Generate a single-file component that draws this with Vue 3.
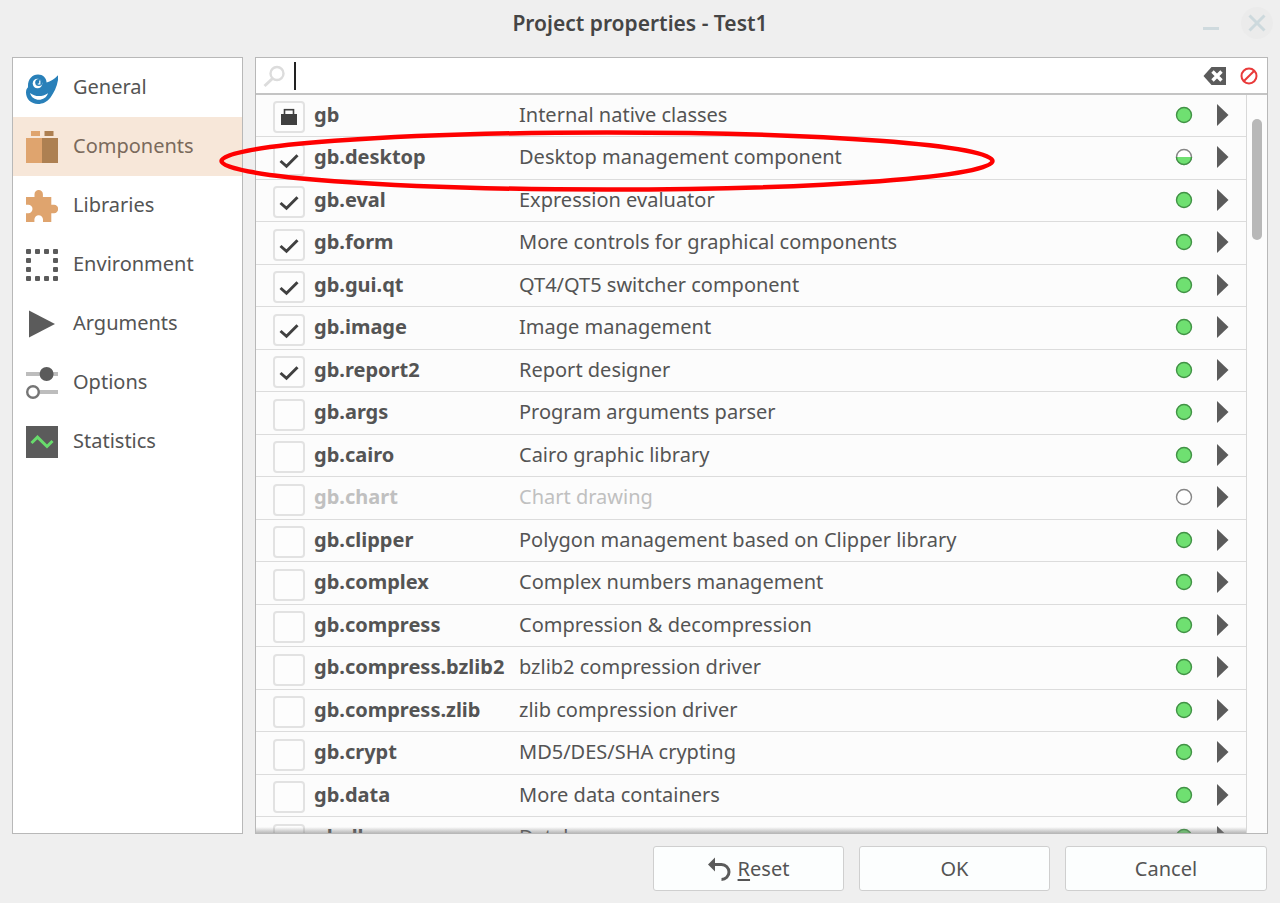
<script setup>
import { ref } from 'vue'

const sections = ['General', 'Components', 'Libraries', 'Environment', 'Arguments', 'Options', 'Statistics']
const current = ref('Components')
const query = ref('')

const envDots = [
  [0, 0], [9, 0], [18, 0], [27, 0],
  [0, 9], [27, 9],
  [0, 18], [27, 18],
  [0, 27], [9, 27], [18, 27], [27, 27],
]

const components = ref([
  { name: 'gb', text: 'Internal native classes', on: true, locked: true, state: 'full' },
  { name: 'gb.desktop', text: 'Desktop management component', on: true, state: 'half' },
  { name: 'gb.eval', text: 'Expression evaluator', on: true, state: 'full' },
  { name: 'gb.form', text: 'More controls for graphical components', on: true, state: 'full' },
  { name: 'gb.gui.qt', text: 'QT4/QT5 switcher component', on: true, state: 'full' },
  { name: 'gb.image', text: 'Image management', on: true, state: 'full' },
  { name: 'gb.report2', text: 'Report designer', on: true, state: 'full' },
  { name: 'gb.args', text: 'Program arguments parser', on: false, state: 'full' },
  { name: 'gb.cairo', text: 'Cairo graphic library', on: false, state: 'full' },
  { name: 'gb.chart', text: 'Chart drawing', on: false, state: 'none' },
  { name: 'gb.clipper', text: 'Polygon management based on Clipper library', on: false, state: 'full' },
  { name: 'gb.complex', text: 'Complex numbers management', on: false, state: 'full' },
  { name: 'gb.compress', text: 'Compression & decompression', on: false, state: 'full' },
  { name: 'gb.compress.bzlib2', text: 'bzlib2 compression driver', on: false, state: 'full' },
  { name: 'gb.compress.zlib', text: 'zlib compression driver', on: false, state: 'full' },
  { name: 'gb.crypt', text: 'MD5/DES/SHA crypting', on: false, state: 'full' },
  { name: 'gb.data', text: 'More data containers', on: false, state: 'full' },
  { name: 'gb.db', text: 'Database', on: false, state: 'full' },
])
</script>

<template>
  <div class="dialog">
    <header class="titlebar">
      <h1>Project properties - Test1</h1>
      <div class="window-buttons">
        <button type="button" aria-label="Minimize">
          <svg width="32" height="32" viewBox="0 0 32 32"><path d="M8 21.500h16" stroke="#cfdade" stroke-width="3" /></svg>
        </button>
        <button type="button" aria-label="Close">
          <svg width="32" height="32" viewBox="0 0 32 32">
            <circle cx="16" cy="16" r="16" fill="#ebebeb" />
            <path d="M8.500 8.500l15 15M23.500 8.500l-15 15" stroke="#cdd9dd" stroke-width="3" />
          </svg>
        </button>
      </div>
    </header>

    <main class="content">
      <nav class="sidebar">
        <button
          v-for="s in sections"
          :key="s"
          type="button"
          class="section"
          :class="{ active: s === current }"
          @click="current = s"
        >
          <svg width="32" height="32" viewBox="0 0 32 32" aria-hidden="true">
            <g v-if="s === 'General'">
              <path fill="#2980b9" d="M32.300 2.800C32.600 12 28.500 20 24.500 25.500C21 30 16.500 32 12 32C5 32 0 27 0 20.500C0 18 .8 16.500 2 15.300C1.500 7.500 6 2.500 12 2.500C17 2.500 20.300 6 20.600 10.500C24.500 9.500 28.500 7 32.300 2.800Z" />
              <path fill="#fff" d="M4 21c5 4 12 4.200 18 .2c-2.500 8.500-15.500 9-18-.2z" />
              <circle cx="11.500" cy="11.500" r="4.800" fill="#fff" />
              <circle cx="12.800" cy="10.500" r="3.600" fill="#2980b9" />
              <path d="M13.800 8.500v3.500h-2" stroke="#fff" stroke-width="1.200" fill="none" />
            </g>
            <g v-else-if="s === 'Components'">
              <path fill="#dfa46e" d="M5 0h9v5H5zM0 7h16v25H0z" />
              <path fill="#ad8052" d="M18.500 0h9v5h-9zM16 7h16v25H16z" />
            </g>
            <path
              v-else-if="s === 'Libraries'"
              fill="#dfa46e"
              d="M0 7H8.500V4.300A4.200 4.200 0 0 1 16.900 4.300V7H25.300V14.800H28A4.200 4.200 0 0 1 28 23.200H25.300V32H17V29.500A4.300 4.300 0 0 0 8.400 29.500V32H0V23.200H2.300A4.200 4.200 0 0 0 2.300 14.800H0Z"
            />
            <g v-else-if="s === 'Environment'" fill="#5b5b5b">
              <rect v-for="d in envDots" :key="d.join()" :x="d[0]" :y="d[1]" width="5" height="5" rx="1" />
            </g>
            <path v-else-if="s === 'Arguments'" fill="#5b5b5b" d="M3 2.500L29 16L3 29.500Z" />
            <g v-else-if="s === 'Options'">
              <path d="M0 7h32M12 25h20" stroke="#bdbdbd" stroke-width="4" />
              <circle cx="20.600" cy="7" r="7" fill="#5b5b5b" />
              <circle cx="7" cy="25" r="5.800" fill="#fff" stroke="#757575" stroke-width="2.400" />
            </g>
            <g v-else>
              <rect width="32" height="32" fill="#5b5b5b" />
              <path d="M5.500 17l6-5.800l9.500 9.300l5.500-5.500" fill="none" stroke="#68dc6c" stroke-width="3" />
            </g>
          </svg>
          <span>{{ s }}</span>
        </button>
      </nav>

      <section class="panel">
        <div class="search">
          <svg width="24" height="24" viewBox="0 0 24 24" aria-hidden="true">
            <circle cx="14" cy="9.500" r="6.500" fill="none" stroke="#dcdcdc" stroke-width="2.400" />
            <path d="M9.500 14.500L1.500 22" stroke="#dcdcdc" stroke-width="3" />
          </svg>
          <span class="caret"></span>
          <input v-model="query" type="text" aria-label="Search components" />
          <button type="button" aria-label="Clear search" @click="query = ''">
            <svg width="24" height="20" viewBox="0 0 24 20">
              <path fill="#5b5b5b" d="M0.500 10L8.500 1H23V19H8.500Z" />
              <path d="M9.500 5.500l9 9M18.500 5.500l-9 9" stroke="#fff" stroke-width="3.400" />
            </svg>
          </button>
          <button type="button" aria-label="Reset filter">
            <svg width="20" height="20" viewBox="0 0 20 20">
              <circle cx="10" cy="10" r="7.500" fill="none" stroke="#e93a3a" stroke-width="2" />
              <path d="M4.700 15.300L15.300 4.700" stroke="#e93a3a" stroke-width="2" />
            </svg>
          </button>
        </div>

        <div class="list">
          <div class="viewport">
            <table>
              <colgroup>
                <col class="c-check" /><col class="c-name" /><col /><col class="c-state" /><col class="c-more" />
              </colgroup>
              <tbody>
                <tr v-for="c in components" :key="c.name" :class="{ disabled: c.state === 'none' }">
                  <td class="check">
                    <div class="box">
                      <input :id="c.name" v-model="c.on" type="checkbox" :disabled="c.locked || c.state === 'none'" />
                      <svg width="32" height="32" viewBox="0 0 32 32" aria-hidden="true">
                        <g v-if="c.locked">
                          <rect x="8" y="13" width="16" height="11" fill="#404040" />
                          <rect x="11.500" y="8.700" width="9" height="6" fill="none" stroke="#404040" stroke-width="1.600" />
                        </g>
                        <path v-else-if="c.on" d="M7.500 17l6 5.300L24.500 11.300" fill="none" stroke="#404040" stroke-width="3" />
                      </svg>
                    </div>
                  </td>
                  <th scope="row"><label :for="c.name">{{ c.name }}</label></th>
                  <td>{{ c.text }}</td>
                  <td>
                    <svg width="18" height="18" viewBox="0 0 18 18" aria-hidden="true">
                      <circle v-if="c.state === 'full'" cx="9" cy="9" r="7.500" fill="#6fe071" stroke="#419245" stroke-width="1.400" />
                      <circle v-else cx="9" cy="9" r="7.500" fill="#fff" stroke="#858585" stroke-width="1.400" />
                      <path v-if="c.state === 'half'" d="M1.500 9a7.500 7.500 0 0 0 15 0z" fill="#6fe071" />
                      <path v-if="c.state === 'half'" d="M1.500 9a7.500 7.500 0 0 0 15 0" fill="none" stroke="#419245" stroke-width="1.400" />
                    </svg>
                  </td>
                  <td>
                    <button type="button" class="more" :aria-label="'Details of ' + c.name">
                      <svg width="12" height="22" viewBox="0 0 12 22"><path fill="#5b5b5b" d="M0 0L11.500 11L0 22Z" /></svg>
                    </button>
                  </td>
                </tr>
              </tbody>
            </table>
            <div class="fade"></div>
          </div>
          <div class="scrollbar"><div class="thumb"></div></div>
        </div>
      </section>
    </main>

    <footer class="actions">
      <button type="button">
        <svg width="24" height="24" viewBox="0 0 24 24" aria-hidden="true">
          <path fill="#5b5b5b" d="M0 7.500L7 .5V14.500Z" />
          <path d="M5 7.500h8.500a7.500 7.500 0 0 1 0 15" fill="none" stroke="#5b5b5b" stroke-width="3" />
        </svg>
        <span><u>R</u>eset</span>
      </button>
      <button type="button">OK</button>
      <button type="button" class="wide">Cancel</button>
    </footer>

    <svg class="highlight" width="776" height="62" viewBox="0 0 776 62" aria-hidden="true">
      <ellipse cx="388" cy="31" rx="385.500" ry="28.500" fill="none" stroke="#fe0000" stroke-width="4.500" />
    </svg>
  </div>
</template>

<style>
body {
  margin: 0;
  background: #efefef;
}
</style>

<style scoped>
.dialog {
  position: relative;
  display: flex;
  flex-direction: column;
  height: 100vh;
  background: #efefef;
  color: #545454;
  font-family: "Noto Sans", sans-serif;
  font-size: 20px;
  line-height: 28px;
}
button {
  padding: 0;
  border: 0;
  background: none;
  color: inherit;
  font: inherit;
}
svg {
  display: block;
  flex: none;
}
.titlebar {
  display: grid;
  grid-template-columns: 1fr auto 1fr;
  flex: none;
  height: 45px;
  padding: 0 7px 12px;
  align-items: center;
}
h1 {
  grid-column: 2;
  margin: 0;
  color: #454545;
  font-size: 21px;
  font-weight: 600;
}
.window-buttons {
  display: flex;
  justify-content: flex-end;
  gap: 14px;
}
.content {
  display: flex;
  flex: 1;
  gap: 12px;
  min-height: 0;
  padding: 0 12px;
}
.sidebar {
  flex: none;
  box-sizing: border-box;
  width: 231px;
  border: 1px solid #b8b8b8;
  background: #fff;
}
.section {
  display: flex;
  align-items: center;
  gap: 15px;
  width: 100%;
  height: 59px;
  padding: 0 13px;
}
.section span {
  padding-bottom: 2px;
}
.section.active {
  background: #f7e7d9;
  color: #7a6a5c;
}
.panel {
  display: flex;
  flex: 1;
  flex-direction: column;
  min-width: 0;
  border: 1px solid #b8b8b8;
  background: #fcfcfc;
}
.search {
  display: flex;
  flex: none;
  align-items: center;
  height: 35px;
  padding: 0 8px 0 7px;
  border-bottom: 2px solid #c4c4c4;
  background: #fff;
}
.caret {
  width: 2px;
  height: 28px;
  margin-left: 7px;
  background: #222;
}
.search input {
  flex: 1;
  min-width: 0;
  padding: 0;
  border: 0;
  outline: 0;
  background: none;
  color: inherit;
  font: inherit;
}
.search button + button {
  margin-left: 12px;
}
.list {
  display: flex;
  flex: 1;
  min-height: 0;
}
.viewport {
  position: relative;
  flex: 1;
  min-width: 0;
  overflow: hidden;
}
table {
  width: 100%;
  border-spacing: 0;
  table-layout: fixed;
}
.c-check {
  width: 58px;
}
.c-name {
  width: 205px;
}
.c-state {
  width: 42px;
}
.c-more {
  width: 29px;
}
tr {
  height: 42px;
}
tr:nth-child(even) {
  height: 43px;
}
td,
th {
  padding: 0 0 2px;
  border-bottom: 1px solid #dcdcdc;
  text-align: left;
  white-space: nowrap;
}
.disabled th,
.disabled td {
  color: #c0c0c0;
}
.check {
  padding: 0 0 3px 17px;
  vertical-align: bottom;
}
.more {
  display: block;
}
.box {
  display: grid;
  width: 32px;
  height: 32px;
}
.box > * {
  grid-area: 1 / 1;
}
.box svg {
  pointer-events: none;
}
.box input {
  box-sizing: border-box;
  width: 32px;
  height: 32px;
  margin: 0;
  border: 2px solid #e2e2e2;
  border-radius: 4px;
  background: #fdfdfd;
  appearance: none;
}
.fade {
  position: absolute;
  right: 0;
  bottom: 0;
  left: 0;
  height: 6px;
  background: linear-gradient(rgba(120, 120, 120, 0), rgba(120, 120, 120, 0.5));
}
.scrollbar {
  flex: none;
  width: 10px;
  padding: 24px 5px 0;
  border-left: 1px solid #d8d8d8;
}
.thumb {
  height: 121px;
  border-radius: 5px;
  background: #b8b8b8;
}
.actions {
  display: flex;
  flex: none;
  justify-content: flex-end;
  gap: 15px;
  padding: 12px 13px;
}
.actions button {
  display: flex;
  box-sizing: border-box;
  align-items: center;
  justify-content: center;
  gap: 6px;
  width: 191px;
  height: 45px;
  border: 1px solid #cfcfcf;
  border-radius: 3px;
  background: #fcfefe;
}
.actions .wide {
  width: 202px;
}
u {
  text-decoration-thickness: 2px;
  text-underline-offset: 3px;
}
.highlight {
  position: absolute;
  top: 130px;
  left: 219px;
  pointer-events: none;
}
</style>
